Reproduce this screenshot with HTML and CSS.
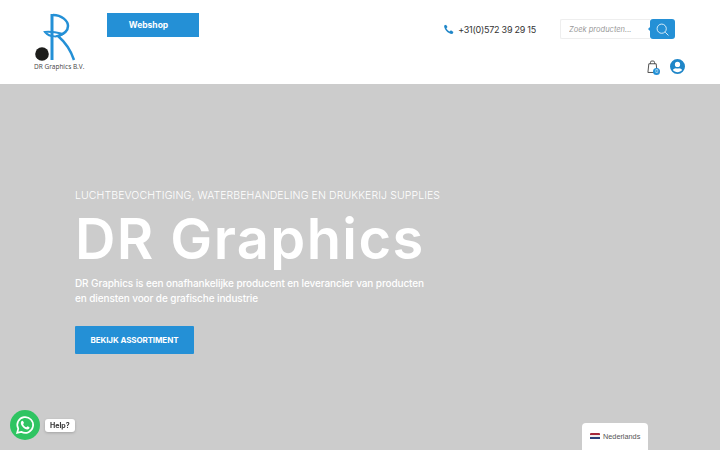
FILE: index.html
```html
<!DOCTYPE html>
<html lang="nl">
<head>
  <meta charset="UTF-8" />
  <meta name="viewport" content="width=device-width, initial-scale=1.0" />
  <title>DR Graphics</title>
  <link rel="stylesheet" href="styles.css">
</head>
<body>

  <header id="topo">
    <a class="logo" href="#">
      <svg class="logo-mark" viewBox="0 0 52 50" width="52" height="50">
        <circle cx="8" cy="41" r="6.800" fill="#1d1d1b"/>
        <path d="M18 1V47" fill="none" stroke="#2490d6" stroke-width="3"/>
        <path d="M19 2C28 2 34 8 34 13C34 18 30 21 24 23C31 29 37 38 40 47" fill="none" stroke="#2490d6" stroke-width="2.500"/>
        <path d="M11 19C17 18 25 20 29 21C25 24 16 25 11 19Z" fill="none" stroke="#2490d6" stroke-width="2"/>
      </svg>
      <span class="logo-text">DR Graphics B.V.</span>
    </a>

    <a class="btn btn-webshop" href="#">Webshop</a>

    <div class="topo-direita">
      <div class="linha-contato">
        <span class="telefone">
          <svg viewBox="0 0 24 24" width="11" height="11"><path fill="#1f86c8" d="M6.600 1.500 2.500 3.200C1.800 11.500 11.500 22.500 21 21.500l1.800-4.300-5.500-3.300-2.600 2.600C11.800 15.300 8.500 12 7.300 9.200l2.600-2.500Z"/></svg>
          +31(0)572 39 29 15
        </span>
        <form class="busca">
          <input type="text" placeholder="Zoek producten...">
          <button type="button" class="btn-busca">
            <svg viewBox="0 0 24 24" width="13" height="13" fill="none" stroke="#fff" stroke-width="1.500"><circle cx="10.500" cy="10.500" r="8.500"/><path d="M17 17l6 6"/></svg>
          </button>
        </form>
      </div>
      <div class="linha-icones">
        <span class="carrinho">
          <svg viewBox="0 0 12 14" width="11" height="13" fill="none" stroke="#444" stroke-width="1"><path d="M2 4h8l1 9.500h-10z"/><path d="M3.800 4V2.500a1.500 1.500 0 0 1 1.500-1.500h1.400a1.500 1.500 0 0 1 1.500 1.500V4"/></svg>
          <span class="carrinho-qtd">0</span>
        </span>
        <svg viewBox="0 0 24 24" width="15" height="15"><path fill="#1f86c8" fill-rule="evenodd" d="M12 0a12 12 0 1 0 0 24a12 12 0 0 0 0-24ZM12 4.500a4.200 4.200 0 1 1 0 8.400a4.200 4.200 0 0 1 0-8.400ZM12 21c-3 0-5.600-1.400-7.300-3.500c.9-1.700 2.700-2.900 4.800-2.900c.8.300 1.600.4 2.500.4s1.700-.1 2.500-.4c2.100 0 3.900 1.200 4.800 2.900C17.600 19.600 15 21 12 21Z"/></svg>
      </div>
    </div>
  </header>

  <section id="banner">
    <p class="banner-sub">LUCHTBEVOCHTIGING, WATERBEHANDELING EN DRUKKERIJ SUPPLIES</p>
    <h1>DR Graphics</h1>
    <p class="banner-texto">DR Graphics is een onafhankelijke producent en leverancier van producten<br>en diensten voor de grafische industrie</p>
    <a class="btn btn-assortiment" href="#">BEKIJK ASSORTIMENT</a>
  </section>

  <a class="whatsapp" href="#">
    <span class="whatsapp-bol">
      <svg viewBox="0 0 24 24" width="20" height="20"><path fill="none" stroke="#fff" stroke-width="2" d="M2.500 21.500l1.400-5A9.500 9.500 0 1 1 7.500 20.200Z"/><path fill="#fff" d="M8.800 6.800c-.5 0-1.800 1-1.800 2.700c0 3 3.800 7.500 7.800 7.800c1.500 0 2.700-1.200 2.700-2.300c0-.4-2-1.500-2.500-1.500c-.4 0-.9 1.200-1.300 1.200c-1.200 0-3.700-2.300-3.900-3.700c0-.4 1-.9 1-1.400c0-.4-1.100-2.800-2-2.800Z"/></svg>
    </span>
    <span class="whatsapp-help">Help?</span>
  </a>

  <div class="idioma">
    <span class="vlag"><i class="vlag-r"></i><i class="vlag-w"></i><i class="vlag-b"></i></span>
    Nederlands
  </div>

</body>
</html>
```

FILE: styles.css
```css
* { margin: 0; padding: 0; box-sizing: border-box; }

html, body {
  height: 450px;
  overflow: hidden;
}

body {
  font-family: Inter, "Open Sans", sans-serif;
  background-color: #ccc;
  color: #333;
}

a { text-decoration: none; }

#topo {
  height: 84px;
  background-color: #fff;
  display: flex;
  align-items: flex-start;
  padding: 13px 45px 0 34px;
}

.logo {
  width: 52px;
  margin-right: 20.500px;
  display: flex;
  flex-direction: column;
}

.logo-mark { display: block; }

.logo-text {
  font-family: "Open Sans", sans-serif;
  font-size: 6.500px;
  line-height: 8px;
  color: #444;
  white-space: nowrap;
}

.btn {
  display: flex;
  align-items: center;
  justify-content: center;
  background-color: #2490d6;
  color: #fff;
  font-weight: 700;
}

.btn-webshop {
  width: 92px;
  height: 24px;
  margin-top: -0.500px;
  padding-right: 8px;
  font-size: 8.500px;
}

.topo-direita {
  margin-left: auto;
  display: flex;
  flex-direction: column;
  align-items: flex-end;
}

.linha-contato {
  display: flex;
  align-items: center;
  margin-top: 6px;
}

.telefone {
  display: flex;
  align-items: center;
  gap: 4px;
  font-size: 9px;
  letter-spacing: -0.250px;
  color: #333;
  margin-right: 24px;
}

.busca {
  position: relative;
  display: flex;
  height: 20px;
}

.busca input {
  width: 90px;
  border: 1px solid #eee;
  border-right: none;
  border-radius: 2px 0 0 2px;
  padding-left: 8px;
  font-family: inherit;
  font-size: 7.500px;
  font-style: italic;
  outline: none;
}

.busca input::placeholder { color: #999; }

.btn-busca {
  position: relative;
  width: 25px;
  border: none;
  border-radius: 3px;
  background-color: #2490d6;
  display: flex;
  align-items: center;
  justify-content: center;
}

.btn-busca::before {
  content: "";
  position: absolute;
  left: -2px;
  top: 8px;
  border-style: solid;
  border-width: 2px 2px 2px 0;
  border-color: transparent #2490d6 transparent transparent;
}

.linha-icones {
  display: flex;
  align-items: center;
  gap: 11px;
  margin-top: 20px;
  margin-right: -10px;
}

.carrinho {
  position: relative;
  display: block;
  width: 13px;
  height: 14px;
  padding-left: 0.500px;
}

.carrinho svg { display: block; }

.carrinho-qtd {
  position: absolute;
  right: -1px;
  bottom: -1px;
  width: 7px;
  height: 7px;
  border-radius: 50%;
  background-color: #2490d6;
  color: #fff;
  font-size: 5px;
  line-height: 7px;
  text-align: center;
}

#banner {
  height: 366px;
  padding: 105px 0 0 75px;
  color: #fff;
}

.banner-sub {
  font-size: 10.500px;
  line-height: 14px;
  letter-spacing: 0.100px;
  font-weight: 300;
}

h1 {
  font-size: 56px;
  line-height: 62px;
  font-weight: 600;
  letter-spacing: 1.400px;
  margin-top: 5px;
}

.banner-texto {
  font-size: 10px;
  line-height: 15px;
  font-weight: 500;
  letter-spacing: -0.100px;
  margin-top: 6px;
}

.btn-assortiment {
  width: 119px;
  height: 28px;
  border-radius: 1px;
  font-size: 8px;
  letter-spacing: -0.100px;
  margin-top: 19.500px;
}

.whatsapp {
  position: fixed;
  left: 10px;
  bottom: 10px;
  display: flex;
  align-items: center;
  gap: 5px;
}

.whatsapp-bol {
  width: 30px;
  height: 30px;
  border-radius: 50%;
  background-color: #2fc462;
  display: flex;
  align-items: center;
  justify-content: center;
}

.whatsapp-help {
  background-color: #fff;
  color: #333;
  border-radius: 3px;
  padding: 2px 5px;
  font-size: 7px;
  font-weight: 700;
  box-shadow: 0 1px 3px rgba(0, 0, 0, 0.2);
}

.idioma {
  position: fixed;
  left: 582px;
  bottom: 0;
  width: 66px;
  height: 27px;
  background-color: #fff;
  border-radius: 4px 4px 0 0;
  display: flex;
  align-items: center;
  gap: 3px;
  padding: 0 0 1px 8px;
  font-family: "Liberation Sans", sans-serif;
  font-size: 7.300px;
  color: #555;
}

.vlag {
  width: 10px;
  height: 7px;
  display: flex;
  flex-direction: column;
  border-radius: 1px;
  overflow: hidden;
}

.vlag i { flex: 1; }
.vlag-r { background-color: #a5283a; }
.vlag-w { background-color: #eee; }
.vlag-b { background-color: #2a3f78; }
```
